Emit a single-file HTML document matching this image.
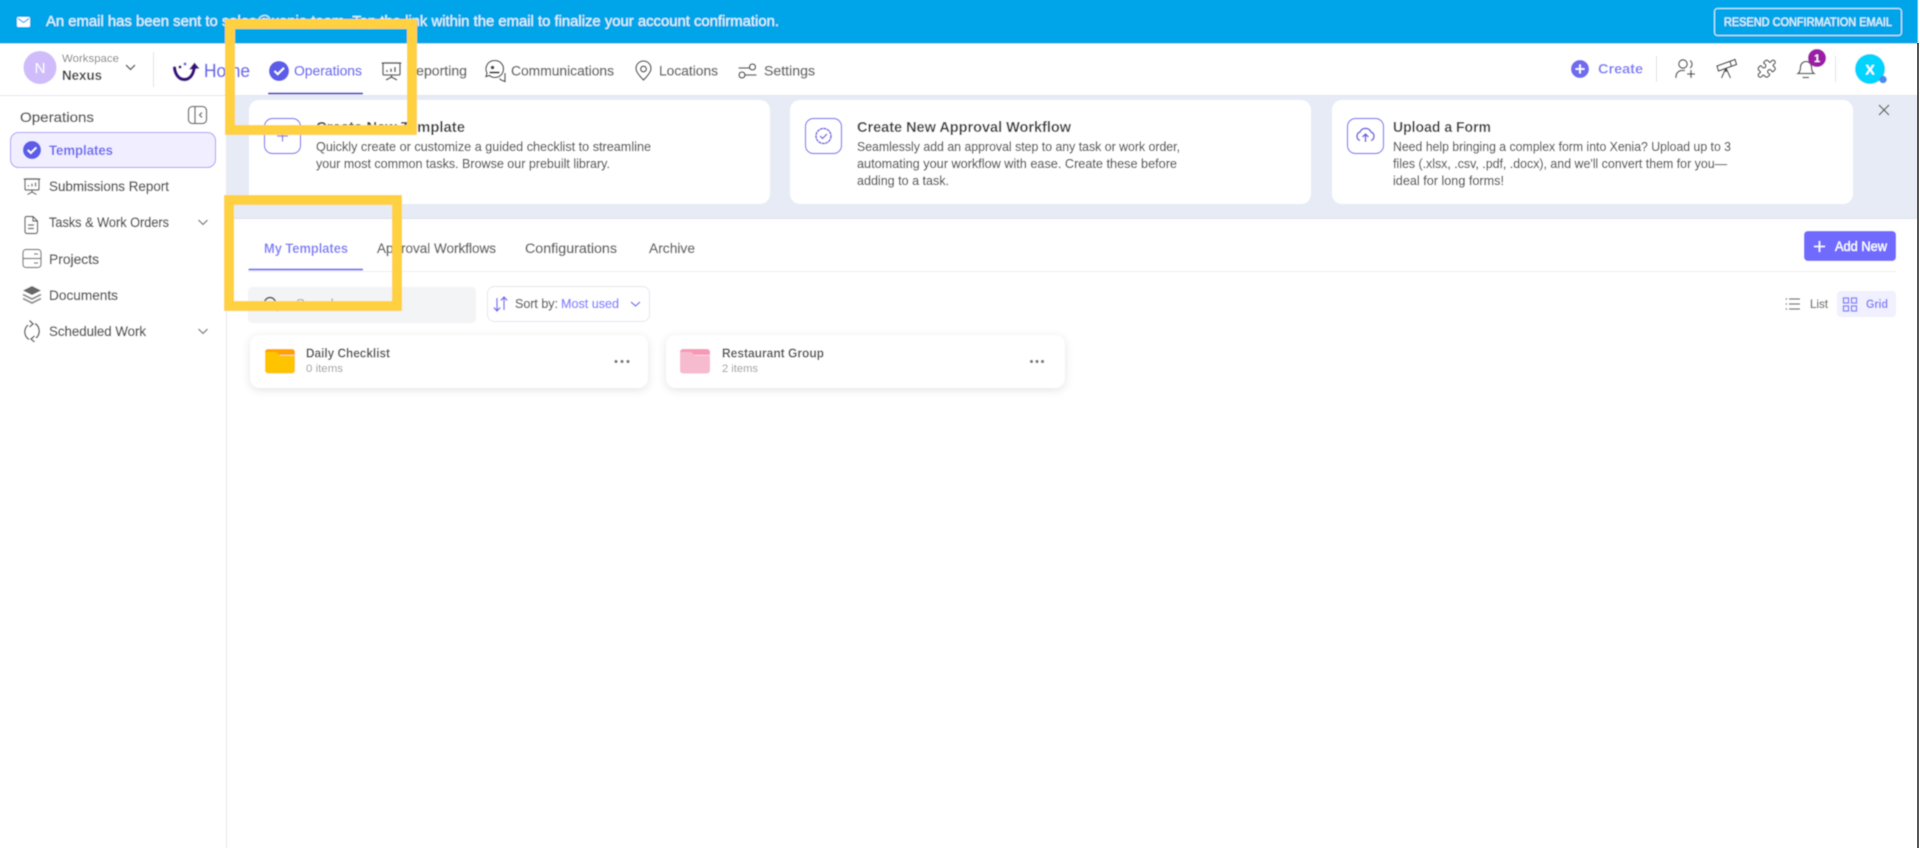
<!DOCTYPE html>
<html lang="en">
<head>
<meta charset="utf-8">
<title>Templates</title>
<style>
html,body{margin:0;padding:0;width:1920px;height:848px;overflow:hidden;background:#fff}
svg{display:block;position:absolute;left:0;top:0}
text{font-family:"Liberation Sans",sans-serif}
.m{fill:currentColor;stroke:currentColor;stroke-width:.3px}
.l{fill:currentColor;stroke:currentColor;stroke-width:.18px}
</style>
</head>
<body>
<svg width="1920" height="848" viewBox="0 0 1920 848" xmlns="http://www.w3.org/2000/svg">
<defs>
<filter id="soft" filterUnits="userSpaceOnUse" x="-10" y="-10" width="1940" height="868"><feGaussianBlur stdDeviation="0.45"/></filter>
<filter id="sh" x="-10%" y="-40%" width="120%" height="190%"><feDropShadow dx="0" dy="2" stdDeviation="4.5" flood-color="#000" flood-opacity="0.11"/></filter>
</defs>
<g filter="url(#soft)">
<rect x="-10" y="-10" width="1940" height="868" fill="#fff"/>

<!-- banner region -->
<rect x="226" y="95" width="1692" height="124" fill="#E6EBF5"/>
<rect x="226" y="218" width="1692" height="1" fill="#DCE0E8"/>

<!-- top banner -->
<rect x="-10" y="-10" width="1928" height="53.500" fill="#00A4E8"/>
<rect x="17" y="17" width="13" height="10" rx="1.500" fill="#fff"/>
<path d="M18 18.500l5.500 4 5.500-4" fill="none" stroke="#00A4E8" stroke-width="1.100"/>
<text x="46" y="26" font-size="14.500" class="l" style="color:#DDF3FD" textLength="733" lengthAdjust="spacingAndGlyphs">An email has been sent to sales@xenia.team. Tap the link within the email to finalize your account confirmation.</text>
<rect x="1714.500" y="8.500" width="187" height="27" rx="3" fill="none" stroke="#CDEFFC" stroke-width="1"/>
<text x="1724" y="26" font-size="11.500" class="m" style="color:#DDF3FD" textLength="168" lengthAdjust="spacingAndGlyphs">RESEND CONFIRMATION EMAIL</text>

<!-- nav -->
<rect x="-10" y="95" width="1928" height="1" fill="#E2E6EE"/>
<circle cx="40" cy="67.500" r="16.500" fill="#D0BCFB"/>
<text x="40" y="73" font-size="15" fill="#fff" text-anchor="middle">N</text>
<text x="62" y="62" font-size="11" fill="#7d7d7d" textLength="57" lengthAdjust="spacingAndGlyphs">Workspace</text>
<text x="62" y="80" font-size="13.500" font-weight="700" fill="#3a3a3a" textLength="40" lengthAdjust="spacingAndGlyphs">Nexus</text>
<path d="M126 65l4.500 4.500 4.500-4.500" fill="none" stroke="#555" stroke-width="1.500"/>
<rect x="153" y="52" width="1" height="35" fill="#E2E2E6"/>

<!-- logo -->
<path d="M174.500 68c1 7.500 5 11.500 10 11.500 5 0 8.500-4.500 9.500-10.500" fill="none" stroke="#3B0F80" stroke-width="3.400" stroke-linecap="round"/>
<path d="M189 69.500l5.500-7 5 6z" fill="#3B0F80"/>
<circle cx="180" cy="67" r="1.500" fill="#3B0F80"/><circle cx="185" cy="64" r="1.500" fill="#6868FE"/>
<text x="204" y="77" font-size="18" class="m" style="color:#6C6AEE" textLength="46" lengthAdjust="spacingAndGlyphs">Home</text>

<!-- operations -->
<circle cx="279" cy="71" r="10" fill="#5B5BE8"/>
<path d="M274.500 71l3.200 3.200 6.300-6.300" fill="none" stroke="#fff" stroke-width="1.900"/>
<text x="294" y="75.500" font-size="13.500" class="m" style="color:#7270EE" textLength="68" lengthAdjust="spacingAndGlyphs">Operations</text>
<rect x="268" y="92.500" width="95" height="2" fill="#5B4FCF"/>

<!-- reporting -->
<g fill="none" stroke="#444" stroke-width="1.300">
<rect x="383" y="63" width="17" height="12" rx="1"/><path d="M381.500 63h20M391.500 75v3M386 80l5.500-3 5.500 3"/>
<path d="M387 72v-2M391 72v-3.500M395 72v-5" stroke-width="1.400"/>
</g>
<text x="406" y="75.500" font-size="13.500" class="m" style="color:#666" textLength="61" lengthAdjust="spacingAndGlyphs">Reporting</text>

<!-- communications -->
<g fill="none" stroke="#444" stroke-width="1.300">
<path d="M494.500 60.500a8.500 8.500 0 0 0-7.500 12.500l-1 3.500 3.500-1a8.500 8.500 0 1 0 5-15z"/>
<path d="M489.500 72.500h10" stroke-width="2"/>
<path d="M499.500 78.500l1.500 1.500 4 1.500v-8.500"/>
</g>
<circle cx="492.500" cy="67.500" r="1.800" fill="#444"/>
<text x="511" y="75.500" font-size="13.500" class="m" style="color:#666" textLength="103" lengthAdjust="spacingAndGlyphs">Communications</text>

<!-- locations -->
<g fill="none" stroke="#444" stroke-width="1.300">
<path d="M643.500 80c-5-5-7.500-8.500-7.500-11.500a7.500 7.500 0 0 1 15 0c0 3-2.500 6.500-7.500 11.500z"/><circle cx="643.500" cy="69" r="2.800"/>
</g>
<text x="659" y="75.500" font-size="13.500" class="m" style="color:#666" textLength="59" lengthAdjust="spacingAndGlyphs">Locations</text>

<!-- settings -->
<g fill="none" stroke="#444" stroke-width="1.300">
<path d="M738.500 68h11M745 75h11.500"/><circle cx="752.500" cy="67" r="3"/><circle cx="742" cy="75" r="3"/>
</g>
<text x="764" y="75.500" font-size="13.500" class="m" style="color:#666" textLength="51" lengthAdjust="spacingAndGlyphs">Settings</text>

<!-- right nav -->
<circle cx="1580" cy="69" r="9" fill="#6F6BEF"/>
<path d="M1575.500 69h9M1580 64.500v9" stroke="#fff" stroke-width="1.800"/>
<text x="1598" y="73.500" font-size="13.500" font-weight="700" fill="#8280F4" textLength="45" lengthAdjust="spacingAndGlyphs">Create</text>
<rect x="1656" y="56" width="1" height="26" fill="#E2E2E6"/>
<g fill="none" stroke="#444" stroke-width="1.300">
<!-- person -->
<circle cx="1683" cy="64" r="4.200"/><path d="M1690 60.500a4.500 4.500 0 0 1 0 7.500M1676 78v-2a6 6 0 0 1 6-5.500h3M1687 74h8M1691 70v8"/>
<!-- telescope -->
<path d="M1717 66l18-6.500 1.500 5-18 6.500zM1730 61.500l1.500 5M1726 68l-4.500 10M1726 68l4.500 10M1726 68v4"/>
<!-- bell -->
<path d="M1798 73.500c2-1.500 2.500-3.500 2.500-6.500a5.500 5.500 0 0 1 11 0c0 3 .5 5 2.500 6.500zM1802.500 77.500h6.500"/>
</g>
<!-- puzzle -->
<path transform="translate(1756.500 58.500) scale(.85)" fill="none" stroke="#444" stroke-width="1.500" d="M19.439 7.85c-.049.322.059.648.289.878l1.568 1.568c.47.47.706 1.087.706 1.704s-.235 1.233-.706 1.704l-1.611 1.611a.98.98 0 0 1-.837.276c-.47-.07-.802-.48-.968-.925a2.501 2.501 0 1 0-3.214 3.214c.446.166.855.497.925.968a.979.979 0 0 1-.276.837l-1.61 1.61a2.404 2.404 0 0 1-1.705.707 2.402 2.402 0 0 1-1.704-.706l-1.568-1.568a1.026 1.026 0 0 0-.877-.29c-.493.074-.84.504-1.02.968a2.5 2.5 0 1 1-3.237-3.237c.464-.18.894-.527.967-1.02a1.026 1.026 0 0 0-.289-.877l-1.568-1.568A2.402 2.402 0 0 1 1.998 12c0-.617.236-1.234.706-1.704L4.23 8.770c.24-.24.581-.353.917-.303.515.077.877.528 1.073 1.010a2.500 2.500 0 1 0 3.259-3.259c-.482-.196-.933-.558-1.010-1.073-.05-.336.062-.676.303-.917l1.525-1.525A2.402 2.402 0 0 1 12 1.998c.617 0 1.234.236 1.704.706l1.568 1.568c.23.23.556.338.877.290.493-.074.84-.504 1.020-.968a2.500 2.500 0 1 1 3.237 3.237c-.464.180-.894.527-.967 1.020Z"/>
<circle cx="1817" cy="58" r="9" fill="#9C1FA8"/>
<text x="1817" y="62" font-size="11" font-weight="700" fill="#fff" text-anchor="middle">1</text>
<rect x="1835" y="56" width="1" height="26" fill="#E2E2E6"/>
<circle cx="1870" cy="69" r="15" fill="#00D4FF"/>
<text x="1870" y="74.500" font-size="14" font-weight="700" fill="#fff" text-anchor="middle">X</text>
<circle cx="1883" cy="79.500" r="3.800" fill="#4A8CF0"/>

<!-- sidebar -->
<rect x="226" y="95" width="1" height="763" fill="#E6E8EE"/>
<text x="20" y="122" font-size="14" class="m" style="color:#555" textLength="74" lengthAdjust="spacingAndGlyphs">Operations</text>
<rect x="188.500" y="106.500" width="18" height="17" rx="4" fill="none" stroke="#666" stroke-width="1.300"/>
<path d="M195 106.500v17" stroke="#666" stroke-width="1.300"/><path d="M202 112.500l-2.500 2.500 2.500 2.500" fill="none" stroke="#666" stroke-width="1.300"/>
<rect x="10.500" y="132.500" width="205" height="35" rx="8" fill="#F0EEFF" stroke="#A99CF5" stroke-width="1"/>
<circle cx="32" cy="150" r="9" fill="#5B5BE8"/>
<path d="M27.800 150l3 3 5.500-5.500" fill="none" stroke="#fff" stroke-width="1.800"/>
<text x="49" y="155" font-size="13.500" font-weight="700" fill="#6C6AEE" textLength="64" lengthAdjust="spacingAndGlyphs">Templates</text>

<g fill="none" stroke="#555" stroke-width="1.200">
<!-- report -->
<rect x="25" y="179" width="14" height="11" rx="1"/><path d="M23.500 179h17M32 190v2.500M27.500 194.500l4.500-2.500 4.500 2.500M28.500 186.500v-1.500M32 186.500v-3M35.500 186.500v-4"/>
<!-- doc -->
<path d="M26 216.500h7l4.500 4.500v10.500a2 2 0 0 1-2 2H27a2 2 0 0 1-2-2v-13a2 2 0 0 1 1-2zM33 216.500v4.500h4.500M28 225h6M28 228.500h6"/>
<!-- projects -->
<rect x="23" y="249.500" width="18" height="18" rx="3" stroke="#777"/><path d="M23 258.500h18M34 254h4M34 263h4" stroke="#777"/>
<!-- scheduled -->
<path d="M28 325a9 9 0 0 0 1 14.500M36 338a9 9 0 0 0-1-14.500" stroke-width="1.400"/>
<path d="M29.500 320.500l3.500 3.500-3.500 3M34.500 336l-3.500 3 3.500 3" stroke-width="1.400"/>
</g>
<!-- documents stack -->
<path d="M23 290.500l9-4.500 9 4.500-9 4.500z" fill="#666"/>
<path d="M23 294.500l9 4.500 9-4.500M23 298.500l9 4.500 9-4.500" fill="none" stroke="#888" stroke-width="1.800"/>
<path d="M198.500 220l4.500 4.500 4.500-4.500M198.500 329l4.500 4.500 4.500-4.500" fill="none" stroke="#777" stroke-width="1.300"/>
<g font-size="13.500" class="m" style="color:#555">
<text x="49" y="191" textLength="120" lengthAdjust="spacingAndGlyphs">Submissions Report</text>
<text x="49" y="227" textLength="120" lengthAdjust="spacingAndGlyphs">Tasks &amp; Work Orders</text>
<text x="49" y="264" textLength="50" lengthAdjust="spacingAndGlyphs">Projects</text>
<text x="49" y="300" textLength="69" lengthAdjust="spacingAndGlyphs">Documents</text>
<text x="49" y="336" textLength="97" lengthAdjust="spacingAndGlyphs">Scheduled Work</text>
</g>

<!-- promo cards -->
<rect x="249" y="100" width="521" height="104" rx="10" fill="#fff"/>
<rect x="790" y="100" width="521" height="104" rx="10" fill="#fff"/>
<rect x="1332" y="100" width="521" height="104" rx="10" fill="#fff"/>
<g fill="#fff" stroke="#8077F2" stroke-width="1.200">
<rect x="264.500" y="118.500" width="36" height="35" rx="8"/>
<rect x="805.500" y="118.500" width="36" height="35" rx="8"/>
<rect x="1347.500" y="118.500" width="36" height="35" rx="8"/>
</g>
<path d="M277 136h11M282.500 130.500v11" stroke="#8077F2" stroke-width="1.300"/>
<circle cx="823.500" cy="136" r="7.500" fill="none" stroke="#6A5FE0" stroke-width="1.500" stroke-dasharray="3 .5"/>
<path d="M820 136l2.500 2.500 4.500-4.500" fill="none" stroke="#6A5FE0" stroke-width="1.300"/>
<path d="M1360 140.500a4.500 4.500 0 0 1 0-8.500 6 6 0 0 1 11 0 4.500 4.500 0 0 1 0 8.500M1365.500 142v-8M1362.500 137l3-3 3 3" fill="none" stroke="#6A5FE0" stroke-width="1.500"/>

<g font-size="15" font-weight="700" fill="#3f3f3f">
<text x="316" y="132" textLength="149" lengthAdjust="spacingAndGlyphs">Create New Template</text>
<text x="857" y="132" textLength="214" lengthAdjust="spacingAndGlyphs">Create New Approval Workflow</text>
<text x="1393" y="132" textLength="98" lengthAdjust="spacingAndGlyphs">Upload a Form</text>
</g>
<g font-size="12.500" class="l" style="color:#555">
<text x="316" y="151" textLength="335" lengthAdjust="spacingAndGlyphs">Quickly create or customize a guided checklist to streamline</text>
<text x="316" y="168" textLength="294" lengthAdjust="spacingAndGlyphs">your most common tasks. Browse our prebuilt library.</text>
<text x="857" y="151" textLength="323" lengthAdjust="spacingAndGlyphs">Seamlessly add an approval step to any task or work order,</text>
<text x="857" y="168" textLength="320" lengthAdjust="spacingAndGlyphs">automating your workflow with ease. Create these before</text>
<text x="857" y="185" textLength="92" lengthAdjust="spacingAndGlyphs">adding to a task.</text>
<text x="1393" y="151" textLength="338" lengthAdjust="spacingAndGlyphs">Need help bringing a complex form into Xenia? Upload up to 3</text>
<text x="1393" y="168" textLength="334" lengthAdjust="spacingAndGlyphs">files (.xlsx, .csv, .pdf, .docx), and we'll convert them for you—</text>
<text x="1393" y="185" textLength="111" lengthAdjust="spacingAndGlyphs">ideal for long forms!</text>
</g>
<path d="M1879 105l10 10M1889 105l-10 10" stroke="#666" stroke-width="1.300"/>

<!-- tabs -->
<rect x="248" y="271" width="1648" height="1" fill="#EDEDED"/>
<rect x="248.500" y="268.500" width="114.500" height="2" fill="#7B79F5"/>
<text x="264" y="253" font-size="13.500" font-weight="700" fill="#8280F4" textLength="84" lengthAdjust="spacingAndGlyphs">My Templates</text>
<g font-size="13.500" class="m" style="color:#666">
<text x="377" y="253" textLength="119" lengthAdjust="spacingAndGlyphs">Approval Workflows</text>
<text x="525" y="253" textLength="92" lengthAdjust="spacingAndGlyphs">Configurations</text>
<text x="649" y="253" textLength="46" lengthAdjust="spacingAndGlyphs">Archive</text>
</g>
<rect x="1804" y="231" width="92" height="30" rx="4" fill="#6F6BFF"/>
<path d="M1814 246.500h11M1819.500 241v11" stroke="#fff" stroke-width="1.600"/>
<text x="1835" y="251" font-size="13.500" class="m" style="color:#fff" textLength="52" lengthAdjust="spacingAndGlyphs">Add New</text>

<!-- search + sort -->
<rect x="248" y="287" width="228" height="36" rx="4" fill="#F3F4F6"/>
<circle cx="270" cy="303" r="5.500" fill="none" stroke="#444" stroke-width="1.500"/>
<path d="M274 307l4 4" stroke="#444" stroke-width="1.500"/>
<text x="296" y="308" font-size="13" fill="#999" textLength="42" lengthAdjust="spacingAndGlyphs">Search</text>
<rect x="487.500" y="286.500" width="162" height="35" rx="7" fill="#fff" stroke="#E6E7EC" stroke-width="1"/>
<path d="M497 298v13M493.800 307.500l3.200 3.500 3.200-3.500" fill="none" stroke="#6C6AEE" stroke-width="1.300"/>
<path d="M504 310v-13M500.800 300.500l3.200-3.500 3.200 3.500" fill="none" stroke="#6C6AEE" stroke-width="1.300"/>
<text x="515" y="308" font-size="12.500" class="m" style="color:#666" textLength="43" lengthAdjust="spacingAndGlyphs">Sort by:</text>
<text x="561" y="308" font-size="12.500" class="m" style="color:#8A87FF" textLength="58" lengthAdjust="spacingAndGlyphs">Most used</text>
<path d="M631 302l4.500 4 4.500-4" fill="none" stroke="#6C6AEE" stroke-width="1.300"/>

<!-- view switch -->
<path d="M1789 299h11M1789 304h11M1789 309h11M1785.500 299h1.500M1785.500 304h1.500M1785.500 309h1.500" stroke="#666" stroke-width="1.300"/>
<text x="1810" y="308" font-size="12" class="m" style="color:#777" textLength="18" lengthAdjust="spacingAndGlyphs">List</text>
<rect x="1837" y="291" width="59" height="26" rx="4" fill="#F0F0FF"/>
<g fill="none" stroke="#7B79F5" stroke-width="1.300">
<rect x="1843.500" y="298" width="5" height="5"/><rect x="1851.500" y="298" width="5" height="5"/>
<rect x="1843.500" y="306" width="5" height="5"/><rect x="1851.500" y="306" width="5" height="5"/>
</g>
<text x="1866" y="308" font-size="12" font-weight="700" fill="#8280F4" textLength="22" lengthAdjust="spacingAndGlyphs">Grid</text>

<!-- folder cards -->
<rect x="250" y="335" width="398" height="53" rx="10" fill="#fff" filter="url(#sh)"/>
<rect x="666" y="335" width="399" height="53" rx="10" fill="#fff" filter="url(#sh)"/>
<path d="M265 352a3 3 0 0 1 3-3h24a3 3 0 0 1 3 3v3h-30z" fill="#FFA200"/>
<path d="M265 352l11 0 4 3.500h15v15a3 3 0 0 1-3 3h-24a3 3 0 0 1-3-3z" fill="#FFC400"/>
<path d="M680 352a3 3 0 0 1 3-3h24a3 3 0 0 1 3 3v3h-30z" fill="#F799B4"/>
<path d="M680 352l11 0 4 3.500h15v15a3 3 0 0 1-3 3h-24a3 3 0 0 1-3-3z" fill="#F7BBCF"/>
<text x="306" y="357.500" font-size="12.500" font-weight="700" fill="#555" textLength="84" lengthAdjust="spacingAndGlyphs">Daily Checklist</text>
<text x="306" y="372" font-size="11" fill="#999" textLength="37" lengthAdjust="spacingAndGlyphs">0 items</text>
<text x="722" y="357.500" font-size="12.500" font-weight="700" fill="#555" textLength="102" lengthAdjust="spacingAndGlyphs">Restaurant Group</text>
<text x="722" y="372" font-size="11" fill="#999" textLength="36" lengthAdjust="spacingAndGlyphs">2 items</text>
<g fill="#777">
<circle cx="616" cy="361.500" r="1.600"/><circle cx="622" cy="361.500" r="1.600"/><circle cx="628" cy="361.500" r="1.600"/>
<circle cx="1031.500" cy="361.500" r="1.600"/><circle cx="1037" cy="361.500" r="1.600"/><circle cx="1042.500" cy="361.500" r="1.600"/>
</g>

<!-- annotation rectangles -->
<rect x="230" y="24" width="182" height="106" fill="none" stroke="#FFD040" stroke-width="10"/>
<rect x="229" y="200" width="168" height="106" fill="none" stroke="#FFD040" stroke-width="10"/>
</g>
<rect x="1917.300" y="43" width="1.400" height="805" fill="#111"/>
</svg>
</body>
</html>
